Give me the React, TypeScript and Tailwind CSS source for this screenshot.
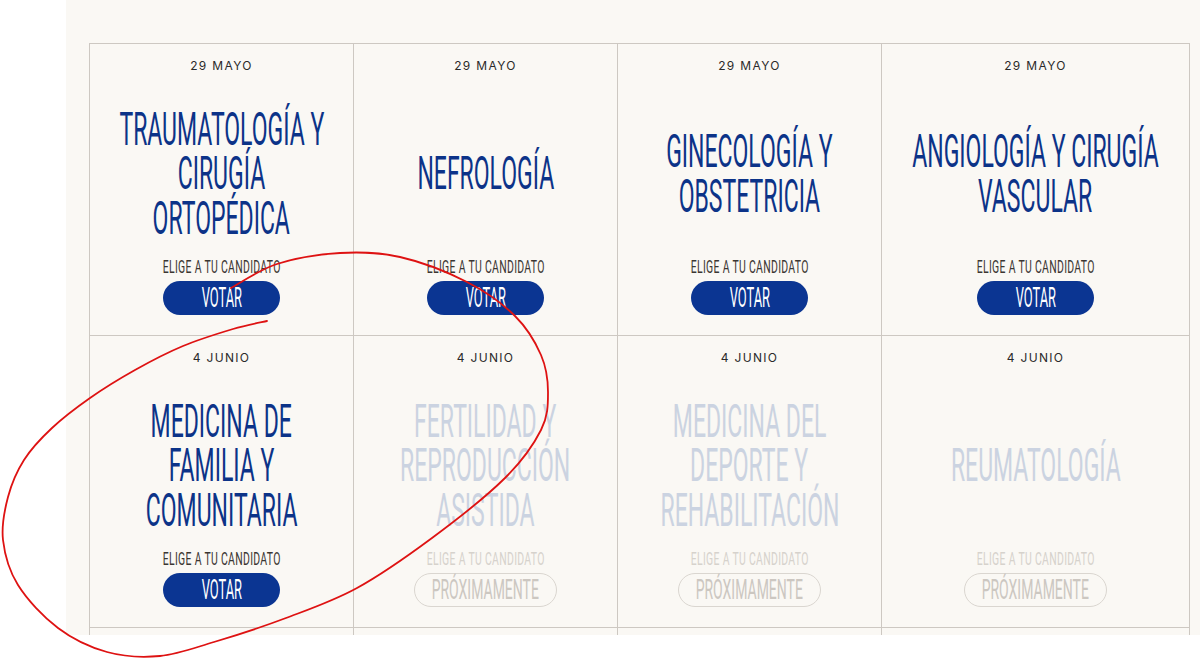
import React from "react";

type Cell = { date: string; lines: string[]; active: boolean };

const cells: Cell[] = [
  { date: "29 MAYO", lines: ["TRAUMATOLOGÍA Y", "CIRUGÍA", "ORTOPÉDICA"], active: true },
  { date: "29 MAYO", lines: ["NEFROLOGÍA"], active: true },
  { date: "29 MAYO", lines: ["GINECOLOGÍA Y", "OBSTETRICIA"], active: true },
  { date: "29 MAYO", lines: ["ANGIOLOGÍA Y CIRUGÍA", "VASCULAR"], active: true },
  { date: "4 JUNIO", lines: ["MEDICINA DE", "FAMILIA Y", "COMUNITARIA"], active: true },
  { date: "4 JUNIO", lines: ["FERTILIDAD Y", "REPRODUCCIÓN", "ASISTIDA"], active: false },
  { date: "4 JUNIO", lines: ["MEDICINA DEL", "DEPORTE Y", "REHABILITACIÓN"], active: false },
  { date: "4 JUNIO", lines: ["REUMATOLOGÍA"], active: false },
];

const pts: [number, number][] = [
  [231, 288], [277, 264], [340, 253], [400, 257], [467, 282], [515, 316],
  [541, 355], [548, 392], [541, 430], [505, 478], [432, 538], [357, 588],
  [286, 618], [214, 642], [160, 656], [107, 652], [58, 628], [18, 585],
  [3, 540], [8, 497], [24, 460], [52, 428], [90, 398], [135, 370],
  [183, 346], [233, 329], [267, 321],
];

function smoothPath(p: [number, number][]) {
  let d = `M ${p[0][0]} ${p[0][1]}`;
  for (let i = 0; i < p.length - 1; i++) {
    const p0 = p[i - 1] || p[i];
    const p1 = p[i];
    const p2 = p[i + 1];
    const p3 = p[i + 2] || p2;
    const c1x = p1[0] + (p2[0] - p0[0]) / 6;
    const c1y = p1[1] + (p2[1] - p0[1]) / 6;
    const c2x = p2[0] - (p3[0] - p1[0]) / 6;
    const c2y = p2[1] - (p3[1] - p1[1]) / 6;
    d += ` C ${c1x.toFixed(1)} ${c1y.toFixed(1)} ${c2x.toFixed(1)} ${c2y.toFixed(1)} ${p2[0]} ${p2[1]}`;
  }
  return d;
}

const redPath = smoothPath(pts);

function CellView({ cell, wide }: { cell: Cell; wide: boolean }) {
  const { active } = cell;
  return (
    <div
      className={`${wide ? "w-[308px]" : "w-[264px]"} h-[292px] border-r border-b border-[#cdc8c2] flex flex-col items-center pt-[14px]`}
    >
      <div className="h-[16px] leading-[16px] text-[12px] tracking-[0.11em] text-[#2a2a2a] font-[Inter,sans-serif]">
        {cell.date}
      </div>
      <div className="h-[183px] pt-[16px] w-full flex flex-col justify-center">
        {cell.lines.map((l) => (
          <div key={l} className="flex justify-center w-full">
            <span
              className={`shrink-0 whitespace-nowrap text-[46px] leading-[44.5px] font-[Roboto,sans-serif] [transform:scaleX(0.5)] ${
                active ? "text-[#0c3388]" : "text-[#cbd3e1]"
              }`}
            >
              {l}
            </span>
          </div>
        ))}
      </div>
      <div className="h-[20px] flex justify-center w-full">
        <span
          className={`shrink-0 whitespace-nowrap text-[18px] leading-[20px] font-[Roboto,sans-serif] tracking-[0.03em] [transform:scaleX(0.58)] ${
            active ? "text-[#3a3632]" : "text-[#d6d2cc]"
          }`}
        >
          ELIGE A TU CANDIDATO
        </span>
      </div>
      {active ? (
        <div className="mt-[4px] w-[117px] h-[34px] rounded-full bg-[#0b3592] flex justify-center items-center">
          <span className="shrink-0 whitespace-nowrap text-[28px] leading-[34px] text-white font-[Roboto,sans-serif] [transform:scaleX(0.46)]">
            VOTAR
          </span>
        </div>
      ) : (
        <div className="mt-[4px] w-[143px] h-[34px] rounded-full border border-[#dad6d0] flex justify-center items-center">
          <span className="shrink-0 whitespace-nowrap text-[28px] leading-[32px] text-[#ccc7c1] font-[Roboto,sans-serif] [transform:scaleX(0.5)]">
            PRÓXIMAMENTE
          </span>
        </div>
      )}
    </div>
  );
}

export default function App() {
  return (
    <div className="relative w-[1200px] h-[659px] bg-white overflow-hidden">
      <div className="ml-[66px] h-[635px] bg-[#faf8f4] overflow-hidden pt-[43px] pl-[23px]">
        <div className="grid grid-cols-[264px_264px_264px_308px] w-max border-l border-t border-[#cdc8c2]">
          {cells.map((c, i) => (
            <CellView key={i} cell={c} wide={i % 4 === 3} />
          ))}
          <div className="w-[264px] h-[292px] border-r border-[#cdc8c2]" />
          <div className="w-[264px] h-[292px] border-r border-[#cdc8c2]" />
          <div className="w-[264px] h-[292px] border-r border-[#cdc8c2]" />
          <div className="w-[308px] h-[292px] border-r border-[#cdc8c2]" />
        </div>
      </div>
      <svg
        className="absolute left-0 top-0 pointer-events-none"
        width="1200"
        height="659"
        viewBox="0 0 1200 659"
      >
        <path d={redPath} fill="none" stroke="#de1212" strokeWidth="1.8" strokeLinecap="round" />
      </svg>
    </div>
  );
}
